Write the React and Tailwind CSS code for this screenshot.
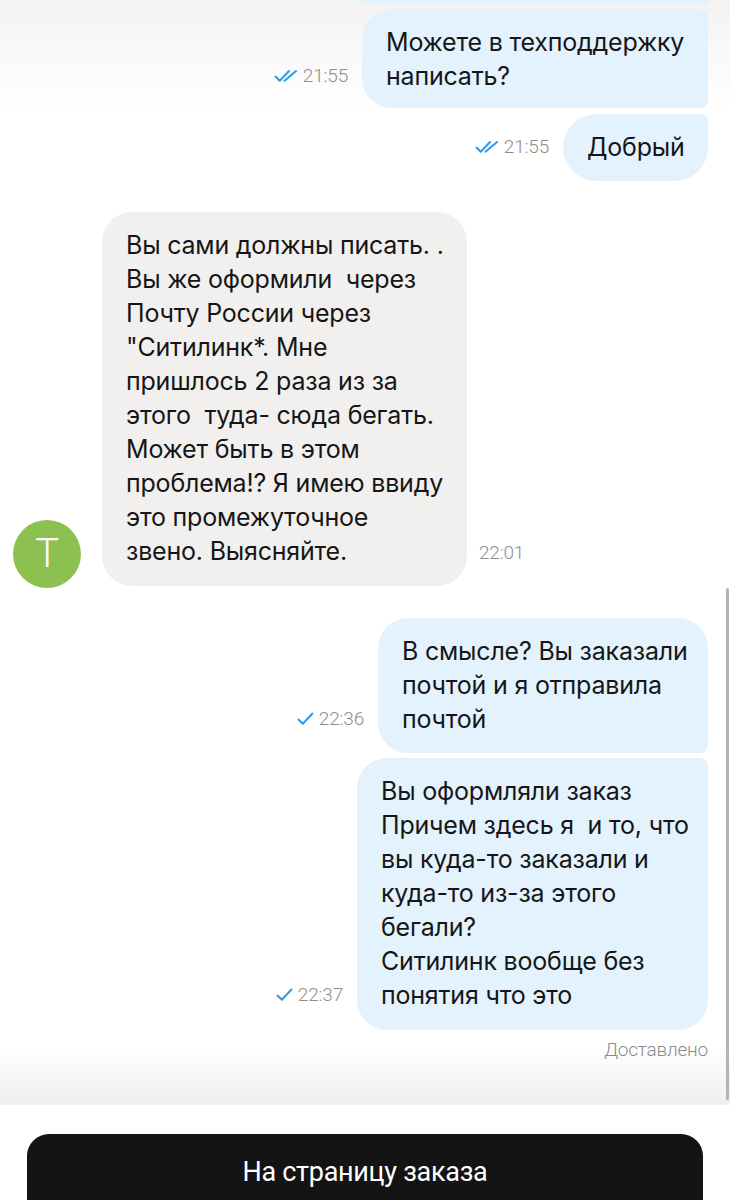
import React from 'react';

const SingleCheck = () => (
  <svg width="17" height="14" viewBox="0 0 17 14" fill="none">
    <path d="M1.5 7.5 L5.8 11.8 L15.5 1.5" stroke="#2f9be0" strokeWidth="2" strokeLinecap="round" strokeLinejoin="round" />
  </svg>
);

const DoubleCheck = () => (
  <svg width="24" height="14" viewBox="0 0 24 14" fill="none">
    <path d="M1.5 7.5 L5.8 11.8 L15 2" stroke="#2f9be0" strokeWidth="2" strokeLinecap="round" strokeLinejoin="round" />
    <path d="M10.5 11.8 L22 2" stroke="#2f9be0" strokeWidth="2" strokeLinecap="round" strokeLinejoin="round" />
  </svg>
);

const Time = ({ value, check }) => (
  <div className="flex items-center gap-[5px] h-[34px] text-[19px] text-[#8d8d8d] font-['Roboto',sans-serif] font-light">
    {check === 2 && <DoubleCheck />}
    {check === 1 && <SingleCheck />}
    <span>{value}</span>
  </div>
);

const Lines = ({ lines }) =>
  lines.map((l, i) => (
    <React.Fragment key={i}>
      {l}
      {i < lines.length - 1 && <br />}
    </React.Fragment>
  ));

const Outgoing = ({ lines, time, check, width, corners, pb = 'pb-[17px]' }) => (
  <div className="flex items-end justify-end gap-[14px]">
    <div className={pb}>
      <Time value={time} check={check} />
    </div>
    <div
      className={`bg-[#e3f2fc] pl-[24px] pr-[20px] pt-[16px] text-[25px] leading-[34px] text-[#161616] whitespace-pre ${pb} ${width} ${corners}`}
    >
      <Lines lines={lines} />
    </div>
  </div>
);

export default function App() {
  return (
    <div className="relative w-[730px] h-[1200px] overflow-hidden bg-white font-['Inter',sans-serif]">
      <div className="relative h-[1105px] overflow-hidden bg-white">
        <div className="absolute inset-x-0 top-0 h-[110px] bg-gradient-to-b from-[#f3f3f3] to-transparent pointer-events-none" />
        <div className="absolute inset-x-0 bottom-0 h-[60px] bg-gradient-to-b from-transparent to-[#efefef] pointer-events-none" />

        <div className="relative flex flex-col pr-[22px] tracking-[-0.2px]">
          <div className="flex justify-end">
            <div className="h-[5px] w-[348px] bg-[#e3f2fc] rounded-bl-[5px] rounded-br-[4px]" />
          </div>

          <div className="mt-[4px]">
            <Outgoing
              lines={['Можете в техподдержку', 'написать?']}
              time="21:55"
              check={2}
              pb="pb-[15px]"
              width="w-[346px]"
              corners="rounded-l-[30px] rounded-r-[8px]"
            />
          </div>

          <div className="mt-[6px]">
            <Outgoing
              lines={['Добрый']}
              time="21:55"
              check={2}
              width="w-[145px]"
              corners="rounded-l-[34px] rounded-tr-[8px] rounded-br-[34px]"
            />
          </div>

          <div className="mt-[31px] flex items-end pl-[13px] gap-[21px]">
            <div className="w-[68px] h-[68px] mb-[-2px] rounded-full bg-[#8cc152] flex items-center justify-center text-white text-[40px] font-['Roboto',sans-serif] font-light">
              T
            </div>
            <div className="w-[365px] bg-[#f1f0ef] rounded-[30px] pl-[24px] pr-[16px] pt-[16px] pb-[18px] text-[25px] leading-[34px] text-[#161616] whitespace-pre">
              <Lines
                lines={[
                  'Вы сами должны писать. .',
                  'Вы же оформили  через',
                  'Почту России через',
                  '"Ситилинк*. Мне',
                  'пришлось 2 раза из за',
                  'этого  туда- сюда бегать.',
                  'Может быть в этом',
                  'проблема!? Я имею ввиду',
                  'это промежуточное',
                  'звено. Выясняйте.',
                ]}
              />
            </div>
            <div className="ml-[-9px] pb-[16px]">
              <div className="h-[34px] flex items-center text-[19px] text-[#8d8d8d] font-['Roboto',sans-serif] font-light">22:01</div>
            </div>
          </div>

          <div className="mt-[32px]">
            <Outgoing
              lines={['В смысле? Вы заказали', 'почтой и я отправила', 'почтой']}
              time="22:36"
              check={1}
              width="w-[330px]"
              corners="rounded-l-[30px] rounded-tr-[30px] rounded-br-[8px]"
            />
          </div>

          <div className="mt-[5px]">
            <Outgoing
              lines={[
                'Вы оформляли заказ',
                'Причем здесь я  и то, что',
                'вы куда-то заказали и',
                'куда-то из-за этого',
                'бегали?',
                'Ситилинк вообще без',
                'понятия что это',
              ]}
              time="22:37"
              check={1}
              pb="pb-[18px]"
              width="w-[351px]"
              corners="rounded-l-[30px] rounded-tr-[8px] rounded-br-[30px]"
            />
          </div>

          <div className="mt-[8px] text-right text-[19px] leading-[24px] text-[#8a8a8a] font-['Roboto',sans-serif] font-light">
            Доставлено
          </div>
        </div>

        <div className="absolute right-[1px] top-[588px] w-[3px] h-[512px] rounded-full bg-[#b4b4b4]" />
      </div>

      <div className="px-[27px] pt-[29px]">
        <button className="w-full h-[90px] rounded-[22px] bg-[#141414] text-white text-[27px] font-['Roboto',sans-serif] flex items-start justify-center pt-[18px] tracking-[-0.3px]">
          На страницу заказа
        </button>
      </div>
    </div>
  );
}
